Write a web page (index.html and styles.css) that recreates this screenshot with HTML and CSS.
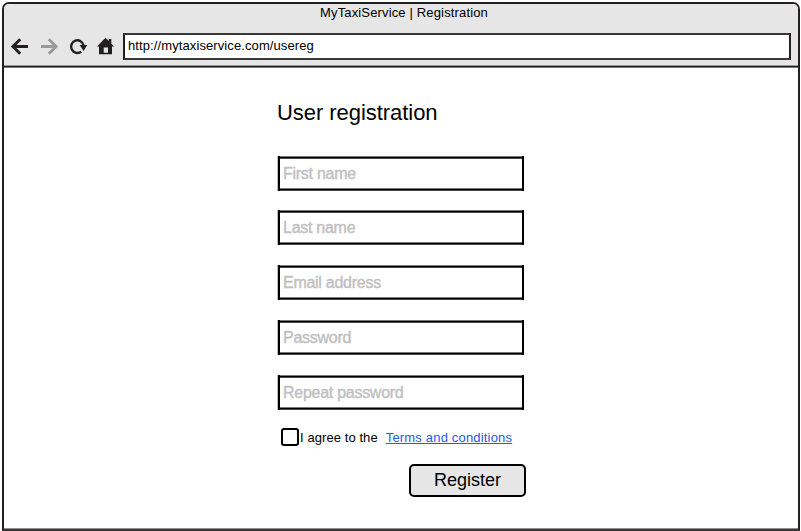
FILE: index.html
```html
<!DOCTYPE html>
<html lang="en">
<head>
<meta charset="utf-8">
<title>MyTaxiService | Registration</title>
<link rel="stylesheet" href="styles.css">
</head>
<body>
<div class="window">
  <header class="chrome">
    <div class="title">MyTaxiService | Registration</div>
    <div class="toolbar">
      <svg class="icons" width="119" height="28" viewBox="4 32 119 28" aria-hidden="true">
        <path d="M28 46.500H13M20.200 39.300l-7.200 7.200 7.200 7.200" fill="none" stroke="#231f20" stroke-width="3"/>
        <path d="M41 46.500H56M48.800 39.300l7.200 7.200-7.200 7.200" fill="none" stroke="#999" stroke-width="3"/>
        <path d="M81.300 51.600A6.300 6.300 0 1 1 83.600 45.500" fill="none" stroke="#231f20" stroke-width="2.400"/>
        <path d="M79.600 45h7.600l-3.600 6z" fill="#231f20"/>
        <path fill="#231f20" fill-rule="evenodd" d="M97 46.500l8.500-8.700 3.300 3.300v-2h2.500v4.600l2.900 2.800h-2.200v7.700h-13v-7.700zM103.700 47.500v5.300h4.300v-5.300z"/>
      </svg>
      <div class="address">http://mytaxiservice.com/usereg</div>
    </div>
  </header>
  <main class="page">
    <form class="form">
      <h1 class="heading">User registration</h1>
      <div class="field first">First name</div>
      <div class="field">Last name</div>
      <div class="field">Email address</div>
      <div class="field">Password</div>
      <div class="field">Repeat password</div>
      <div class="agree">
        <span class="box"></span>
        <span class="agree-text">I agree to the</span>
        <a class="terms" href="#">Terms and conditions</a>
      </div>
      <button class="register" type="button">Register</button>
    </form>
  </main>
</div>
</body>
</html>
```
FILE: styles.css
```css
* { box-sizing: border-box; }

body {
  margin: 0;
  padding: 2px 1px 0 2px;
  height: 531px;
  overflow: hidden;
  background: #fff;
  color: #000;
  font-family: "Liberation Sans", Arial, sans-serif;
  font-size: 13px;
}

.window {
  height: 529px;
  border: 2px solid #231f20;
  border-bottom-color: #3a3738;
  border-radius: 7px 7px 0 0;
  box-shadow: inset 0 -1px #918f90;
  overflow: hidden;
}

.chrome {
  height: 64px;
  background: #e6e6e6;
  box-shadow: inset 0 -1px #777, inset 0 -2px #231f20, inset 0 -3px #999;
}

.title {
  height: 28px;
  line-height: 18px;
  padding-left: 316px;
  letter-spacing: 0.15px;
  white-space: nowrap;
}

.toolbar {
  display: flex;
  height: 28px;
}

.icons { flex: none; }

.address {
  width: 668px;
  height: 27px;
  margin-top: 1px;
  padding-left: 3px;
  border: 2px solid #231f20;
  border-top-color: #3a3738;
  border-bottom-color: #3a3738;
  background: #fff;
  letter-spacing: 0.1px;
  line-height: 22px;
  white-space: nowrap;
}

.form {
  display: flex;
  flex-direction: column;
  width: 249px;
  margin-left: 273px;
  padding-top: 30px;
}

.heading {
  height: 58px;
  margin: 0;
  font-size: 22px;
  font-weight: 400;
  letter-spacing: -0.05px;
  line-height: 30px;
  white-space: nowrap;
}

.field {
  width: 246px;
  height: 35px;
  margin: 0 0 20px 1px;
  padding-left: 3px;
  border: solid #000;
  border-width: 0 2px;
  box-shadow:
    inset 0 1px #777, inset 0 2px #000, inset 0 3px #444,
    inset 0 -1px #444, inset 0 -2px #000, inset 0 -3px #777,
    -1px 0 #bbb;
  color: #c0c0c0;
  font-size: 16px;
  letter-spacing: -0.27px;
  line-height: 35px;
  -webkit-text-stroke: 0.4px #c0c0c0;
  white-space: nowrap;
}

.first { margin-bottom: 19px; }

.agree {
  display: flex;
  align-items: center;
  height: 20px;
  margin-top: -3px;
  padding-left: 4px;
  white-space: nowrap;
}

.box {
  flex: none;
  width: 18px;
  height: 18px;
  border: 2px solid #000;
  border-radius: 3px;
}

.agree-text {
  margin-left: 1px;
  letter-spacing: 0.08px;
}

.terms {
  margin-left: 8px;
  color: #2758f0;
  letter-spacing: 0.18px;
  text-decoration: underline;
}

.register {
  align-self: flex-end;
  width: 117px;
  height: 33px;
  margin-top: 17px;
  padding: 0;
  border: 2px solid #000;
  border-radius: 5px;
  background: #e6e6e6;
  color: #000;
  font-family: inherit;
  font-size: 18px;
  line-height: 29px;
}
```
